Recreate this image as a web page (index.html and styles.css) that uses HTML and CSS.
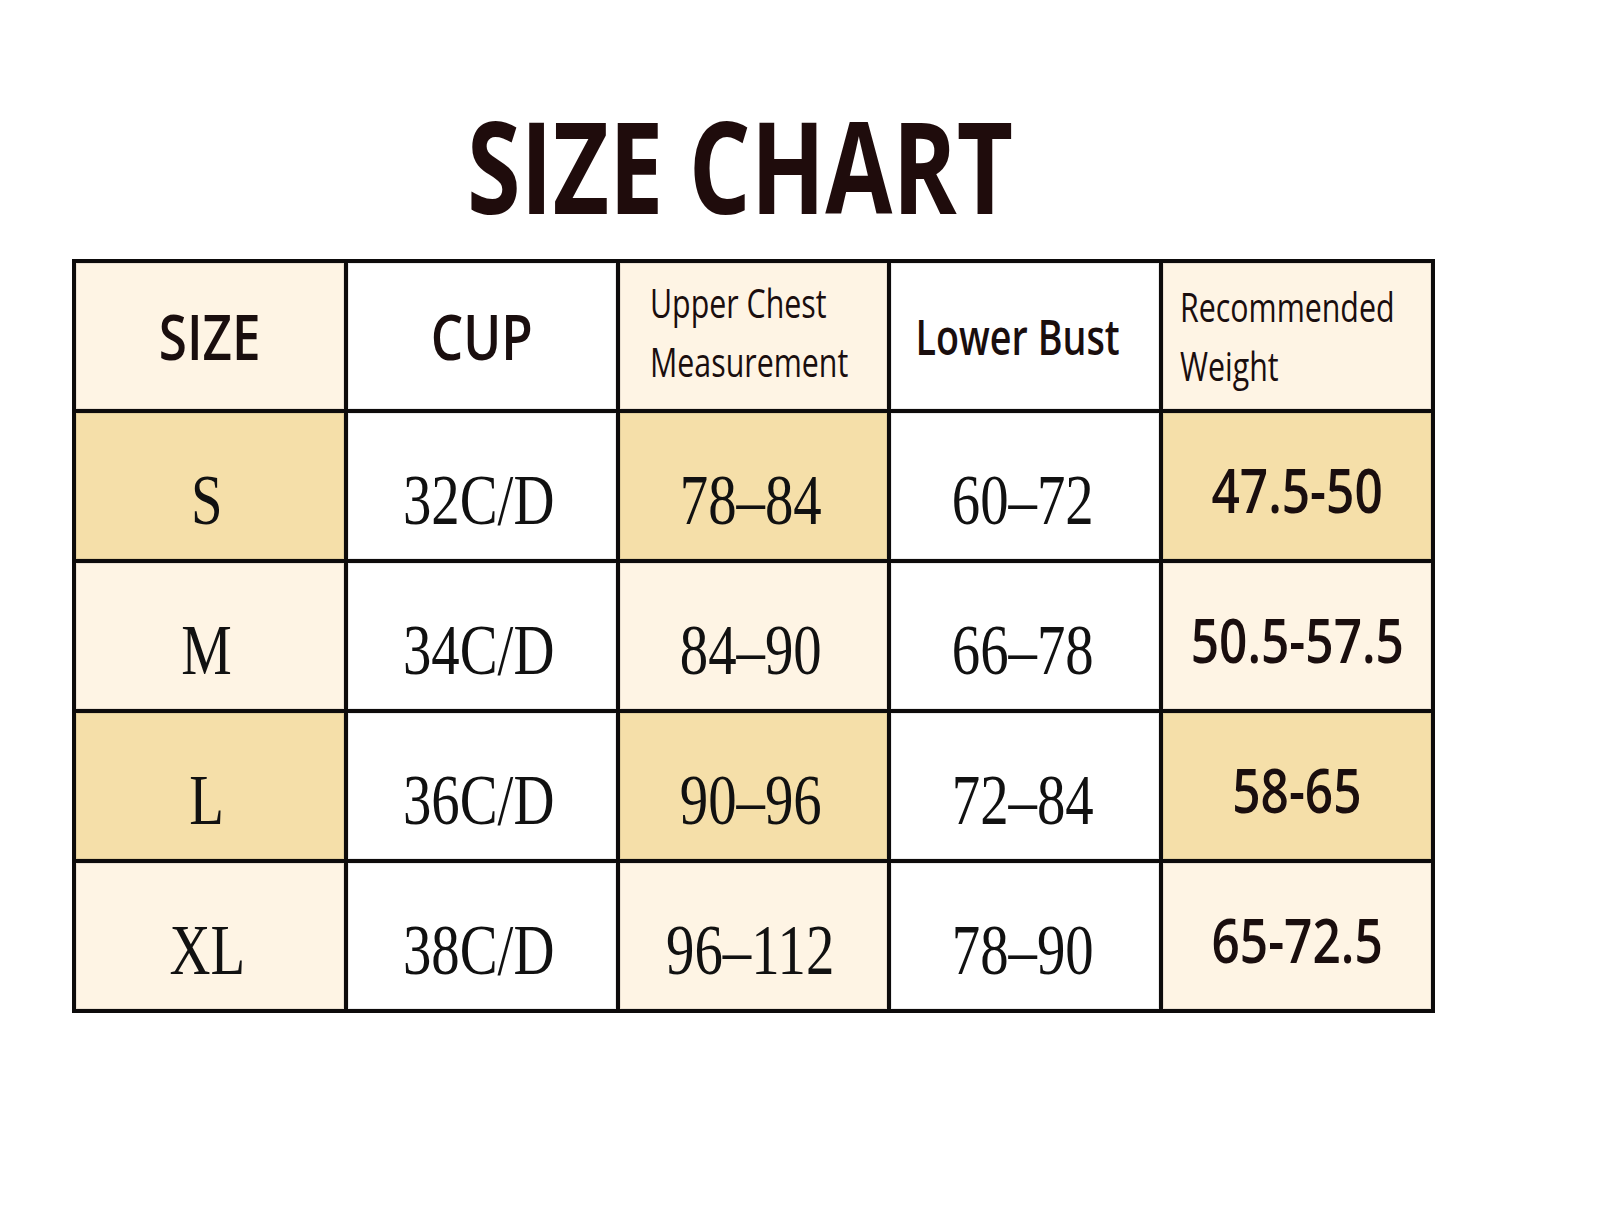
FILE: index.html
```html
<!DOCTYPE html>
<html>
<head>
<meta charset="utf-8">
<link rel="stylesheet" href="styles.css">
</head>
<body>
<div class="page">
  <h1 class="title"><span class="title-text">SIZE CHART</span></h1>
  <div class="chart">
    <div class="cell cream head"><span class="cond big">SIZE</span></div>
    <div class="cell white head"><span class="cond big">CUP</span></div>
    <div class="cell cream head left upper"><span class="cond small">Upper Chest<br>Measurement</span></div>
    <div class="cell white head lower"><span class="cond mid">Lower Bust</span></div>
    <div class="cell cream head left rec"><span class="cond small">Recommended<br>Weight</span></div>

    <div class="cell tan ser"><span class="serif">S</span></div>
    <div class="cell white ser"><span class="serif">32C/D</span></div>
    <div class="cell tan ser"><span class="serif">78–84</span></div>
    <div class="cell white ser"><span class="serif">60–72</span></div>
    <div class="cell tan wt"><span class="cond num">47.5-50</span></div>

    <div class="cell cream ser"><span class="serif">M</span></div>
    <div class="cell white ser"><span class="serif">34C/D</span></div>
    <div class="cell cream ser"><span class="serif">84–90</span></div>
    <div class="cell white ser"><span class="serif">66–78</span></div>
    <div class="cell cream wt"><span class="cond num">50.5-57.5</span></div>

    <div class="cell tan ser"><span class="serif">L</span></div>
    <div class="cell white ser"><span class="serif">36C/D</span></div>
    <div class="cell tan ser"><span class="serif">90–96</span></div>
    <div class="cell white ser"><span class="serif">72–84</span></div>
    <div class="cell tan wt"><span class="cond num">58-65</span></div>

    <div class="cell cream ser"><span class="serif">XL</span></div>
    <div class="cell white ser"><span class="serif">38C/D</span></div>
    <div class="cell cream ser"><span class="serif">96–112</span></div>
    <div class="cell white ser"><span class="serif">78–90</span></div>
    <div class="cell cream wt"><span class="cond num">65-72.5</span></div>
  </div>
</div>
</body>
</html>
```
FILE: styles.css
```css
html, body {
  margin: 0;
  padding: 0;
  background: #ffffff;
}

.page {
  width: 1600px;
  height: 1221px;
  padding-top: 101px;
  box-sizing: border-box;
}

.title {
  margin: 0;
  padding-left: 467px;
  height: 158px;
  font-family: "Open Sans", "DejaVu Sans", sans-serif;
  font-weight: 700;
  font-size: 128px;
  line-height: 128px;
  color: #1f0c0c;
}

.title-text {
  display: inline-block;
  transform: scaleX(0.76);
  transform-origin: left center;
  white-space: nowrap;
}

.chart {
  margin-left: 72px;
  width: 1363px;
  box-sizing: border-box;
  display: grid;
  grid-template-columns: repeat(5, minmax(0, 1fr));
  grid-auto-rows: 146px;
  gap: 4px;
  padding: 4px;
  background: #0d0b0b;
}

.cell {
  display: flex;
  align-items: center;
  justify-content: center;
  box-shadow: inset 0 0 0 1px rgba(0, 0, 0, 0.08);
  color: #1a1010;
  box-sizing: border-box;
  min-width: 0;
  overflow: visible;
}

.cream { background: #fef4e4; }
.white { background: #ffffff; }
.tan { background: #f5dfa9; }

.cond {
  display: inline-block;
  font-family: "Open Sans", "DejaVu Sans", sans-serif;
  font-weight: 600;
  transform: scaleX(0.8);
  white-space: nowrap;
  color: #1a0e0e;
}

.big {
  font-size: 64px;
  line-height: 1;
}

.mid {
  font-size: 49px;
  line-height: 1;
  font-weight: 600;
  transform: scaleX(0.77);
}

.small {
  font-size: 41px;
  line-height: 59px;
  font-weight: 500;
  transform: scaleX(0.74);
}

.head.left {
  justify-content: flex-start;
}

.head.left .cond {
  transform-origin: left center;
}

.upper {
  padding-left: 30px;
  padding-bottom: 8px;
}

.rec {
  padding-left: 17px;
}

.lower {
  padding-right: 16px;
}

.num {
  font-size: 62px;
  line-height: 1;
  font-weight: 600;
}

.wt {
  padding-top: 6px;
}

.serif {
  display: inline-block;
  font-family: "Liberation Serif", "Times New Roman", serif;
  font-size: 71px;
  line-height: 1;
  transform: scaleX(0.8);
  white-space: nowrap;
  color: #111;
}

.ser {
  padding-top: 28px;
  padding-right: 6px;
}
```
